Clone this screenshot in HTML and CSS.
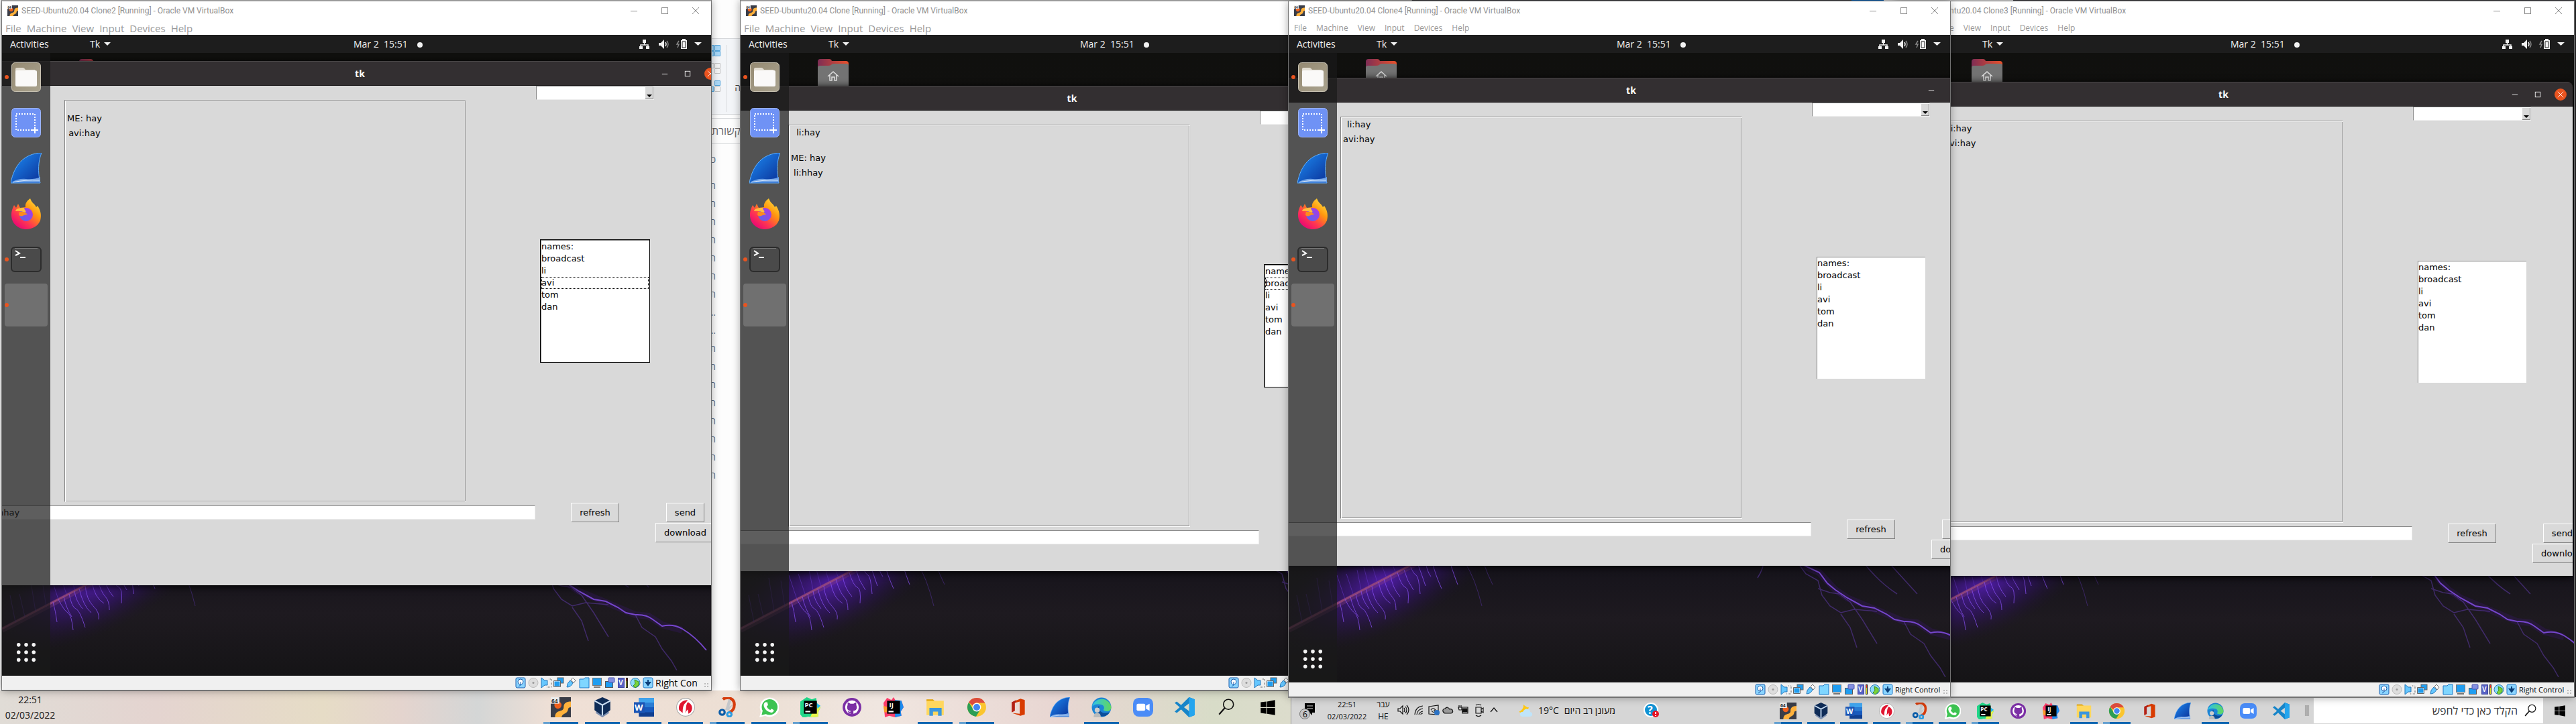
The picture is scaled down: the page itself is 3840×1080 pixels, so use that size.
FILE: index.html
```html
<!DOCTYPE html>
<html lang="en">
<head>
<meta charset="utf-8">
<title>Desktop</title>
<link rel="stylesheet" href="styles.css">
</head>
<body>
<svg class="defs" aria-hidden="true">
  <defs>
    <linearGradient id="g-files" x1="0" y1="0" x2="1" y2="1"><stop offset="0" stop-color="#958a72"/><stop offset="1" stop-color="#aaa38f"/></linearGradient>
    <linearGradient id="g-fin" x1="0" y1="0" x2="1" y2="1"><stop offset="0" stop-color="#1d8df5"/><stop offset="1" stop-color="#0a2f96"/></linearGradient>
    <linearGradient id="g-fox" x1="1" y1="0" x2="0.2" y2="1"><stop offset="0" stop-color="#fff44f"/><stop offset=".4" stop-color="#ff980e"/><stop offset=".7" stop-color="#ff3750"/><stop offset="1" stop-color="#e5007a"/></linearGradient>
    <linearGradient id="g-globe" x1="0" y1="1" x2="1" y2="0"><stop offset="0" stop-color="#4f6bef"/><stop offset="1" stop-color="#b833e1"/></linearGradient>
    <linearGradient id="g-tab"><stop offset="0" stop-color="#7e2d55"/><stop offset="1" stop-color="#e8502a"/></linearGradient>
    <linearGradient id="g-edge" x1="0" y1="0" x2="1" y2="0"><stop offset="0" stop-color="#2fc3ea"/><stop offset="1" stop-color="#62d75d"/></linearGradient>
    <radialGradient id="g-glow"><stop offset="0" stop-color="#5a1fc0" stop-opacity=".85"/><stop offset=".5" stop-color="#3a1280" stop-opacity=".5"/><stop offset="1" stop-color="#1d1030" stop-opacity="0"/></radialGradient>
  </defs>
  <symbol id="vm" viewBox="0 0 28 28"><rect width="28" height="28" fill="#3a3d48"/><path d="M6 28c0-12 12-6 12-14 0-6 4-8 10-8v8c-6 0-2 5-7 8-3 2-5 2-6 6z" fill="#ffb13b"/><circle cx="10" cy="11" r="5" fill="#f0601d"/><rect width="12" height="9" fill="#eee"/><text x="1" y="8" font-size="8" font-weight="700" font-family="Liberation Sans" fill="#222">64</text></symbol>
  <symbol id="files" viewBox="0 0 44 44"><rect x=".5" y=".5" width="43" height="43" rx="5" fill="url(#g-files)" stroke="#c9c3b3"/><path d="M6 14V10q0-2 2-2h9q2 0 4 3h14v6z" fill="#e2ddd2"/><rect x="6" y="12" width="32" height="24" rx="2" fill="#faf9f8"/></symbol>
  <symbol id="shot" viewBox="0 0 44 44"><rect x=".5" y=".5" width="43" height="43" rx="5" fill="#6f92f5" stroke="#9db5ff"/><rect x="7" y="9" width="28" height="24" fill="none" stroke="#fff" stroke-width="2" stroke-dasharray="2 2"/><path d="M35 28v10M30 33h10" stroke="#fff" stroke-width="2"/></symbol>
  <symbol id="fin" viewBox="0 0 46 46"><path d="M0 45C5 18 20 1 46 0c-5 12-6 28-2 45z" fill="url(#g-fin)" stroke="#5fb0ff"/><path d="M1 44q10-6 22-5t21-3v8z" fill="#6fa2e6"/><path d="M3 44q18-4 40-3" stroke="#dcebff" fill="none"/></symbol>
  <symbol id="fox" viewBox="0 0 46 46"><path d="M5 10l3 4 3-6 3 6 8-1C21 7 25 3 29 0c3 8 6 7 9 13l2-2c5 7 6 15 4 22-3 8-12 13-21 13C11 46 1 37 1 25 1 18 3 14 5 10z" fill="url(#g-fox)"/><circle cx="23" cy="24" r="10" fill="url(#g-globe)"/><path d="M7 19q8-1 14 2c4-2-1-3-1-7-4 0-12 0-13 5z" fill="#ffbd3f"/><path d="M12 24c3 6 8-1 13 0-2-3-7-5-12-4z" fill="#ff8a1e"/></symbol>
  <symbol id="term" viewBox="0 0 46 38"><rect x="1" y="1" width="44" height="36" rx="5" fill="#4a4a4a" stroke="#2c2c2c" stroke-width="2"/><path d="M6 2.500h34" stroke="#777"/><path d="M7 6l6 4-6 3" fill="none" stroke="#fff" stroke-width="2"/><path d="M14 16h8" stroke="#fff" stroke-width="2"/></symbol>
  <symbol id="apps" viewBox="0 0 30 32"><path d="M3 3h0M15 3h0M27 3h0M3 15h0M15 15h0M27 15h0M3 27h0M15 27h0M27 27h0" stroke="#f3f3f3" stroke-width="6" stroke-linecap="round"/></symbol>
  <symbol id="home" viewBox="0 0 46 44"><path d="M0 30V4q0-4 4-4h13q3 0 4 3h21q4 0 4 4v20z" fill="url(#g-tab)"/><path d="M0 44V13q0-3 3-3h13q3 0 5-2 1-1 3-1h19q3 0 3 3v34z" fill="#737373"/><path d="M15 26l8-7 8 7M18 24v8h3v-5h4v5h3v-8" fill="none" stroke="#e0e0e0" stroke-width="1.500"/></symbol>
  <symbol id="tray" viewBox="0 0 96 18"><g fill="#f2f2f2"><path d="M6 2h5v5H6zM1 12h5v4H1zM11 12h5v4h-5z"/><path d="M30 7h3l5-5v14l-5-5h-3zM63 3h2V1h5v2h2v13h-9z"/><path d="M83 6h11l-5.500 5z"/></g><path d="M8.500 7v3M3 12v-2h11v2M40 6q2 3 0 6" fill="none" stroke="#f2f2f2" stroke-width="1.500"/><path d="M42 4q4 5 0 10M60 4l-3 5h3l-2 5" fill="none" stroke="#888" stroke-width="1.500"/><path d="M65 5h5v9h-5z" fill="#f2f2f2" stroke="#1d1d1d"/></symbol>
  <symbol id="caret" viewBox="0 0 12 6"><path d="M1 0h10l-5 5z" fill="currentColor"/></symbol>
  <symbol id="drop" viewBox="0 0 12 18"><path d="M2 11h8l-4 4z" fill="#000"/></symbol>
  <symbol id="min" viewBox="0 0 12 12"><path d="M1 6.500h10" stroke="currentColor"/></symbol>
  <symbol id="max" viewBox="0 0 12 12"><rect x="1.500" y="1.500" width="9" height="9" fill="none" stroke="currentColor"/></symbol>
  <symbol id="close" viewBox="0 0 12 12"><path d="M1 1l10 10M11 1L1 11" stroke="currentColor" fill="none"/></symbol>
  <symbol id="devices" viewBox="0 0 207 17">
    <rect x="1" y="1" width="14" height="15" rx="2" fill="#8ad4ff" stroke="#1d5fae"/><circle cx="8" cy="7" r="4" fill="#fff" stroke="#1d5fae"/><path d="M8 7v5l-3 2" stroke="#1d5fae" fill="none"/>
    <circle cx="27" cy="8.500" r="7" fill="#ddd" stroke="#bbb"/><circle cx="27" cy="8.500" r="1.500" fill="#999"/>
    <path d="M39 1l5 4h4v7h-4l-5 4z" fill="#66c7ff" stroke="#2277bb"/><path d="M50 3h4v12h-7" stroke="#aaa" stroke-width="2" fill="none" stroke-dasharray="1 1"/>
    <rect x="63" y="1" width="9" height="8" fill="#1f9df0" stroke="#666"/><rect x="58" y="6" width="9" height="8" fill="#1f9df0" stroke="#eee"/><path d="M57.500 5.500h10v9h-10z" fill="none" stroke="#666"/>
    <path d="M77 15q0-6 5-10l4 4q-3 6-9 6z" fill="#66c7ff" stroke="#2277bb"/><path d="M83 4l3-3 4 4-3 4z" fill="#fff" stroke="#777"/>
    <path d="M96 16V3h6l2-2h6v15z" fill="#7fd6ff" stroke="#1d78c8"/>
    <rect x="115.500" y="1.500" width="13" height="11" fill="#1f9df0" stroke="#777"/><path d="M117 15h10" stroke="#777" stroke-width="2"/>
    <rect x="134.500" y="6.500" width="11" height="9" fill="#1f9df0" stroke="#555"/><rect x="139" y="1" width="9" height="7" rx="1" fill="#8490e0" stroke="#4a55b0"/>
    <rect x="153.500" y="1.500" width="9" height="14" fill="#5661c4" stroke="#39439e"/><text x="154" y="12" font-size="10" font-weight="700" font-family="Liberation Sans" fill="#fff">V</text><rect x="165" y="1" width="3" height="15" fill="#222"/><path d="M166.500 6v9" stroke="#d8e020"/><path d="M166.500 2v4" stroke="#f03020"/>
    <circle cx="179" cy="8.500" r="7" fill="#8fdcf8" stroke="#2277bb"/><path d="M178 4l6 3v5l-5 4-3-3 3-3z" fill="#7bd33b" stroke="#3c8e14"/>
    <rect x="191" y="1" width="14" height="15" rx="2" fill="#8ad4ff" stroke="#1d78c8"/><path d="M198 4v5M195 8h6l-3 4z" stroke="#0b3f7a" stroke-width="2" fill="#0b3f7a"/>
  </symbol>
  <symbol id="vbox" viewBox="0 0 28 28"><path d="M14 0l11 5v13l-11 9L3 18V5z" fill="#0f2c57"/><path d="M3 5l11 6 11-6M14 11v16" stroke="#c8dcf2" stroke-width="2" fill="none"/><path d="M5 21l9 6 9-6" stroke="#7c8fb0" stroke-width="2" fill="none"/></symbol>
  <symbol id="word" viewBox="0 0 28 28"><path d="M7 1h21v26H7z" fill="#185abd"/><path d="M7 1h21v7H7z" fill="#41a5ee"/><path d="M7 8h21v6H7z" fill="#2b7cd3"/><path d="M7 21h21v6H7z" fill="#103f91"/><rect y="7" width="15" height="15" fill="#1b55b5"/><text x="1" y="19" font-size="12" font-weight="700" font-family="Open Sans" fill="#fff">W</text></symbol>
  <symbol id="wire" viewBox="0 0 28 28"><circle cx="14" cy="14" r="12.500" fill="#fff" stroke="#aaa"/><path d="M5 18C3 9 10 4 17 4l-3 4c-4 3-4 9-4 14zM13 22c3-5 0-9 4-15 6 2 8 9 4 14l-3 2-1-6z" fill="#e01530"/></symbol>
  <symbol id="snip" viewBox="0 0 28 28"><path d="M8 3C14-2 24 2 24 10c0 6-3 10-7 11" stroke="#d63c0c" stroke-width="4" fill="none"/><path d="M12 16L16 2l4 3-5 13zM10 17l12-7-6 9z" fill="#c4c7ca"/><circle cx="7" cy="21" r="3.500" fill="none" stroke="#0a5ca8" stroke-width="3"/><circle cx="17" cy="24" r="3" fill="none" stroke="#2c9be0" stroke-width="3"/></symbol>
  <symbol id="wa" viewBox="0 0 28 28"><path d="M1 28l2-8A13.500 13.500 0 1 1 9 26z" fill="#fff"/><path d="M4 25l1.500-6A11 11 0 1 1 10 23.500z" fill="#3cc351"/><path d="M9 7l3 0 1 4-2 2q2 4 5 5l2-2 3 2c0 3-3 4-5 3-5-1-9-6-9-10 0-2 1-3 2-4z" fill="#fff"/></symbol>
  <symbol id="pc" viewBox="0 0 28 28"><path d="M0 6l9-6 7 3 6-2 1 7 5 6-3 7v6l-8 1-6-1-7 2-4-5z" fill="#21d789"/><path d="M14 27l9-18 5 5-3 7v6l-8 1z" fill="#e6f54a"/><path d="M22 8l6 4-4 4z" fill="#1fb8ef"/><rect x="5" y="5" width="18" height="18"/><text x="6" y="14" font-size="9" font-weight="700" font-family="Open Sans" fill="#fff">PC</text><path d="M7 20h7" stroke="#fff" stroke-width="2"/></symbol>
  <symbol id="gh" viewBox="0 0 28 28"><circle cx="14" cy="14" r="13" fill="#7b2fa5"/><circle cx="14" cy="14" r="9.500" fill="#fff"/><path d="M8 7l4 2h4l4-2 0 4c2 5 0 8-4 8v5h-4v-2q-3 1-4-3 2 2 4 1v-1c-4 0-6-4-4-8z" fill="#7b2fa5"/></symbol>
  <symbol id="ij" viewBox="0 0 28 28"><path d="M0 8l5-7 6 3 3-4 3 5 8 0 3 9-4 6 1 6-9 2-8-2-6 2z" fill="#fc3d6b"/><path d="M16 4l9 1 3 9-4 6 1 6-9 2z" fill="#1b8cf0"/><path d="M0 12l6 2v7l-5 0z" fill="#fc9a2b"/><rect x="5" y="5" width="18" height="18"/><text x="8" y="14" font-size="9" font-weight="700" font-family="Open Sans" fill="#fff">IJ</text><path d="M7 20h7" stroke="#fff" stroke-width="2"/></symbol>
  <symbol id="folder" viewBox="0 0 28 28"><path d="M2 6V3h9l3 3z" fill="#e0a000"/><path d="M2 5h24v20H2z" fill="#ffd75e"/><path d="M6 26V15h17v11h-5v-6h-7v6z" fill="#3b96de"/></symbol>
  <symbol id="chrome" viewBox="0 0 28 28"><circle cx="14" cy="14" r="13" fill="#fbc52d"/><path d="M3 7a13 13 0 0 1 22.500 1H14a6 6 0 0 0-5.500 4z" fill="#dd4b3e"/><path d="M3 7a13 13 0 0 0 10 20l6-10a6 6 0 0 1-10 0z" fill="#2c9e55"/><circle cx="14" cy="14" r="6" fill="#fff"/><circle cx="14" cy="14" r="4.700" fill="#4486f0"/></symbol>
  <symbol id="office" viewBox="0 0 28 28"><path d="M5 7l12-5 6 2v20l-6 2-12-4 11 1V6L9 8v11l-4 2z" fill="#d83b01"/><path d="M5 7l6-3v3L9 8v11l-4 2z" fill="#b02018"/></symbol>
  <symbol id="edge" viewBox="0 0 28 28"><circle cx="14" cy="14" r="13.500" fill="#1c85d6"/><path d="M1 13A13.500 13.500 0 0 1 27.500 14c0 6-7 7-11 4 3-4 0-8-5-8-5-1-9 1-10.500 3z" fill="url(#g-edge)"/><path d="M11 12c-2 7 4 12 14 9-4 8-17 8-17-2 0-4 1-6 3-7z" fill="#0c4e9a"/><circle cx="8" cy="18" r="3.500" fill="#ccc"/><path d="M3 28q0-6 5-6t5 6z" fill="#bbb"/></symbol>
  <symbol id="zoomapp" viewBox="0 0 28 28"><rect x="0" y="1" width="28" height="26" rx="8" fill="#4a8cf7"/><rect x="5" y="9" width="12" height="10" rx="2" fill="#fff"/><path d="M18 12l5-3v10l-5-3z" fill="#fff"/></symbol>
  <symbol id="code" viewBox="0 0 28 28"><path d="M20 0l8 3v22l-8 3L9 17l-6 5-3-2 7-6-7-6 3-2 6 5zM21 8l-8 6 8 6z" fill="#1685c9"/><path d="M20 0l8 3v22l-8 3z" fill="#24a5ee"/></symbol>
  <symbol id="search" viewBox="0 0 28 28"><circle cx="17" cy="10" r="7" fill="none" stroke="#111" stroke-width="1.500"/><path d="M12 15L4 24" stroke="#111" stroke-width="2"/></symbol>
  <symbol id="start" viewBox="0 0 28 28"><path d="M4 7l8-1v8H4zM13 6l11-2v10H13zM4 15h8v8l-8-1zM13 15h11v10l-11-2z" fill="#000"/></symbol>
  <symbol id="glow" viewBox="0 0 460 260">
    <ellipse cx="140" cy="110" rx="180" ry="76" fill="url(#g-glow)" transform="rotate(-26 140 110)"/>
    <path d="M0 182L180 88L340 4" stroke="#8a3f78" stroke-width="8" opacity=".35" fill="none"/>
    <path d="M0 180L180 86L340 2" stroke="#a4507c" stroke-width="3" opacity=".7" fill="none"/>
    <path d="M76 140q4 14 6 30M84 136q8 16 14 20t8 26M92 132q4 18 12 30M100 128q4 20 10 22t14 28M108 124q2 14 12 26M115 120q6 26 18 36M124 116q2 20 12 30t8 20M134 110q4 24 18 32M142 106q6 20 12 26t6 20M152 100q2 18 14 32M162 96q6 20 12 22t4 24M172 92q4 16 14 30M182 88q4 10 8 12t6 28M192 82q6 16 12 34M204 80q2 14 8 22M214 80q4 18 14 40M240 80q8 24 12 34" stroke="#8850f4" stroke-width="1" fill="none" opacity=".75"/>
    <path d="M262 80q16 24 26 66M290 80q6 18 14 34" stroke="#5a34a8" fill="none" opacity=".5"/>
    <path d="M20 170l-8-40M34 162l-8-34M50 154l-8-50M66 148l-6-40M84 136l-12-36M96 128l-10-30M108 122l-6-30M120 118l-8-30M132 110l-8-26M146 104l-8-20M160 98l-6-16" stroke="#6a38d0" fill="none" opacity=".5"/>
  </symbol>
  <symbol id="bolt" viewBox="0 0 360 220">
    <path d="M20 6L60 32L84 56L104 64L128 90L146 102L180 116L204 126L230 137L250 139L270 152L300 160" stroke="#3b1670" stroke-width="10" opacity=".3" fill="none"/>
    <path d="M20 6L60 32L74 50L104 64L116 80L128 90L146 102L168 114L186 117L204 126L216 134L230 137Q246 136 256 144L270 154Q286 150 300 158Q320 170 336 190" stroke="#7546cc" stroke-width="2" fill="none"/>
    <path d="M60 34L84 66L102 76L108 98L120 114L136 124L156 119L190 122M230 137L240 156L260 170L270 188L284 206L292 220M102 88L120 94L134 96L150 108L168 134L190 170M136 126L150 146L160 176M20 30Q26 50 12 72M150 20Q180 70 220 96M190 30L250 96" stroke="#5f3aa8" stroke-width="1.500" opacity=".55" fill="none"/>
  </symbol>
</svg>

<div class="strip"><span class="strip-blue"></span><span class="strip-light"></span></div>

<aside class="doc" lang="he" dir="rtl">
  <div class="doc-top"></div>
  <div class="doc-ribbon">
    <svg class="doc-tiles" viewBox="0 0 14 70"><g fill="#a9d8f8" stroke="#52a5dd"><path d="M-3 .500h7v8h-7zM5.500.500h8v8h-8zM-3 9.500h7v7h-7zM5.500 9.500h8v7h-8zM5.500 53.500h8v7h-8zM-3 62.500h7v7h-7z"/></g><g fill="#f4f4f4" stroke="#c4c4c4"><path d="M5.500 27.500h8v7h-8zM5.500 35.500h8v7h-8zM5.500 62.500h8v7h-8zM-3 27.500h7v7h-7z"/></g></svg>
    <span class="doc-he">ה</span>
  </div>
  <div class="doc-band">קשורת</div>
  <div class="doc-lines"><p class="doc-first">כ</p><p>ת</p><p>ת</p><p>ת</p><p>ת</p><p>ת</p><p>ת</p><p>ת</p><p>...</p><p>...</p><p>ת</p><p>ת</p><p>ת</p><p>ת</p><p>ת</p><p>ת</p><p>ת</p><p>ת</p></div>
</aside>

<main>
<section class="win w4" aria-label="Clone3">
  <header class="titlebar"><svg class="vm-ico"><use href="#vm"/></svg><h1>SEED-Ubuntu20.04 Clone3 [Running] - Oracle VM VirtualBox</h1><button aria-label="Minimize"><svg><use href="#min"/></svg></button><button aria-label="Maximize"><svg><use href="#max"/></svg></button><button aria-label="Close"><svg><use href="#close"/></svg></button></header>
  <nav class="menubar"><a href="#">File</a><a href="#">Machine</a><a href="#">View</a><a href="#">Input</a><a href="#">Devices</a><a href="#">Help</a></nav>
  <div class="panel"><span class="activities">Activities</span><span class="appmenu">Tk <svg><use href="#caret"/></svg></span><time>Mar 2&nbsp; 15:51</time><svg class="tray"><use href="#tray"/></svg></div>
  <div class="screen">
    <svg class="glow"><use href="#glow"/></svg><svg class="bolt"><use href="#bolt"/></svg><svg class="home"><use href="#home"/></svg>
    <div class="tk">
      <div class="tk-bar"><h2>tk</h2><button aria-label="Minimize"><svg><use href="#min"/></svg></button><button aria-label="Maximize"><svg><use href="#max"/></svg></button><button class="x" aria-label="Close"><svg><use href="#close"/></svg></button></div>
      <div class="tk-body">
        <div class="combo"><select aria-label="Files"><option></option></select><svg><use href="#drop"/></svg></div>
        <div class="tk-mid"><div class="chat"><div class="msgs"><p>li:hay</p><p>avi:hay</p></div></div><ul class="names" role="listbox" aria-label="Names"><li>names:</li><li>broadcast</li><li>li</li><li>avi</li><li>tom</li><li>dan</li></ul></div>
        <div class="tk-row"><input type="text" aria-label="Message"><button class="refresh">refresh</button><button class="send">send</button></div>
        <button class="download">download</button>
      </div>
    </div>
    <div class="dock"><span class="slot on"><svg class="i44"><use href="#files"/></svg></span><span class="slot"><svg class="i44"><use href="#shot"/></svg></span><span class="slot"><svg class="i46"><use href="#fin"/></svg></span><span class="slot"><svg class="i46"><use href="#fox"/></svg></span><span class="slot on"><svg class="i46"><use href="#term"/></svg></span><span class="slot on active"></span><span class="slot apps"><svg><use href="#apps"/></svg></span></div>
  </div>
  <footer class="status"><svg class="devices"><use href="#devices"/></svg><span>Right Control</span><i class="grip"></i></footer>
</section>

<section class="win w2 big" aria-label="Clone">
  <header class="titlebar"><svg class="vm-ico"><use href="#vm"/></svg><h1>SEED-Ubuntu20.04 Clone [Running] - Oracle VM VirtualBox</h1></header>
  <nav class="menubar"><a href="#">File</a><a href="#">Machine</a><a href="#">View</a><a href="#">Input</a><a href="#">Devices</a><a href="#">Help</a></nav>
  <div class="panel"><span class="activities">Activities</span><span class="appmenu">Tk <svg><use href="#caret"/></svg></span><time>Mar 2&nbsp; 15:51</time></div>
  <div class="screen">
    <svg class="glow"><use href="#glow"/></svg><svg class="bolt"><use href="#bolt"/></svg><svg class="home"><use href="#home"/></svg>
    <div class="tk">
      <div class="tk-bar"><h2>tk</h2></div>
      <div class="tk-body">
        <div class="combo"><select aria-label="Files"><option></option></select><svg><use href="#drop"/></svg></div>
        <div class="tk-mid"><div class="chat"><div class="msgs"><p>li:hay</p><p><br>ME: hay</p><p>li:hhay</p></div></div><ul class="names focus" role="listbox" aria-label="Names"><li>names:</li><li class="cur">broadcast</li><li>li</li><li>avi</li><li>tom</li><li>dan</li></ul></div>
        <div class="tk-row"><input type="text" aria-label="Message"></div>
      </div>
    </div>
    <div class="dock"><span class="slot on"><svg class="i44"><use href="#files"/></svg></span><span class="slot"><svg class="i44"><use href="#shot"/></svg></span><span class="slot"><svg class="i46"><use href="#fin"/></svg></span><span class="slot"><svg class="i46"><use href="#fox"/></svg></span><span class="slot on"><svg class="i46"><use href="#term"/></svg></span><span class="slot on active"></span><span class="slot apps"><svg><use href="#apps"/></svg></span></div>
  </div>
  <footer class="status"><svg class="devices"><use href="#devices"/></svg></footer>
</section>

<section class="win w1 big" aria-label="Clone2">
  <header class="titlebar"><svg class="vm-ico"><use href="#vm"/></svg><h1>SEED-Ubuntu20.04 Clone2 [Running] - Oracle VM VirtualBox</h1><button aria-label="Minimize"><svg><use href="#min"/></svg></button><button aria-label="Maximize"><svg><use href="#max"/></svg></button><button aria-label="Close"><svg><use href="#close"/></svg></button></header>
  <nav class="menubar"><a href="#">File</a><a href="#">Machine</a><a href="#">View</a><a href="#">Input</a><a href="#">Devices</a><a href="#">Help</a></nav>
  <div class="panel"><span class="activities">Activities</span><span class="appmenu">Tk <svg><use href="#caret"/></svg></span><time>Mar 2&nbsp; 15:51</time><svg class="tray"><use href="#tray"/></svg></div>
  <div class="screen">
    <svg class="glow"><use href="#glow"/></svg><svg class="bolt"><use href="#bolt"/></svg><svg class="home"><use href="#home"/></svg>
    <div class="tk">
      <div class="tk-bar"><h2>tk</h2><button aria-label="Minimize"><svg><use href="#min"/></svg></button><button aria-label="Maximize"><svg><use href="#max"/></svg></button><button class="x" aria-label="Close"><svg><use href="#close"/></svg></button></div>
      <div class="tk-body">
        <div class="combo"><select aria-label="Files"><option></option></select><svg><use href="#drop"/></svg></div>
        <div class="tk-mid"><div class="chat"><div class="msgs"><p><br>ME: hay</p><p>avi:hay</p></div></div><ul class="names focus" role="listbox" aria-label="Names"><li>names:</li><li>broadcast</li><li>li</li><li class="cur">avi</li><li>tom</li><li>dan</li></ul></div>
        <div class="tk-row"><input type="text" aria-label="Message" value="hhay"><button class="refresh">refresh</button><button class="send">send</button></div>
        <button class="download">download</button>
      </div>
    </div>
    <div class="dock"><span class="slot on"><svg class="i44"><use href="#files"/></svg></span><span class="slot"><svg class="i44"><use href="#shot"/></svg></span><span class="slot"><svg class="i46"><use href="#fin"/></svg></span><span class="slot"><svg class="i46"><use href="#fox"/></svg></span><span class="slot on"><svg class="i46"><use href="#term"/></svg></span><span class="slot on active"></span><span class="slot apps"><svg><use href="#apps"/></svg></span></div>
  </div>
  <footer class="status"><svg class="devices"><use href="#devices"/></svg><span>Right Control</span><i class="grip"></i></footer>
</section>

<section class="win w3" aria-label="Clone4">
  <header class="titlebar"><svg class="vm-ico"><use href="#vm"/></svg><h1>SEED-Ubuntu20.04 Clone4 [Running] - Oracle VM VirtualBox</h1><button aria-label="Minimize"><svg><use href="#min"/></svg></button><button aria-label="Maximize"><svg><use href="#max"/></svg></button><button aria-label="Close"><svg><use href="#close"/></svg></button></header>
  <nav class="menubar"><a href="#">File</a><a href="#">Machine</a><a href="#">View</a><a href="#">Input</a><a href="#">Devices</a><a href="#">Help</a></nav>
  <div class="panel"><span class="activities">Activities</span><span class="appmenu">Tk <svg><use href="#caret"/></svg></span><time>Mar 2&nbsp; 15:51</time><svg class="tray"><use href="#tray"/></svg></div>
  <div class="screen">
    <svg class="glow"><use href="#glow"/></svg><svg class="bolt"><use href="#bolt"/></svg><svg class="home"><use href="#home"/></svg>
    <div class="tk">
      <div class="tk-bar"><h2>tk</h2><button aria-label="Minimize"><svg><use href="#min"/></svg></button><button aria-label="Maximize"><svg><use href="#max"/></svg></button><button class="x" aria-label="Close"><svg><use href="#close"/></svg></button></div>
      <div class="tk-body">
        <div class="combo"><select aria-label="Files"><option></option></select><svg><use href="#drop"/></svg></div>
        <div class="tk-mid"><div class="chat"><div class="msgs"><p>li:hay</p><p>avi:hay</p></div></div><ul class="names" role="listbox" aria-label="Names"><li>names:</li><li>broadcast</li><li>li</li><li>avi</li><li>tom</li><li>dan</li></ul></div>
        <div class="tk-row"><input type="text" aria-label="Message"><button class="refresh">refresh</button><button class="send">send</button></div>
        <button class="download">download</button>
      </div>
    </div>
    <div class="dock"><span class="slot on"><svg class="i44"><use href="#files"/></svg></span><span class="slot"><svg class="i44"><use href="#shot"/></svg></span><span class="slot"><svg class="i46"><use href="#fin"/></svg></span><span class="slot"><svg class="i46"><use href="#fox"/></svg></span><span class="slot on"><svg class="i46"><use href="#term"/></svg></span><span class="slot on active"></span><span class="slot apps"><svg><use href="#apps"/></svg></span></div>
  </div>
  <footer class="status"><svg class="devices"><use href="#devices"/></svg><span>Right Control</span><i class="grip"></i></footer>
</section>
</main>

<div class="taskbars">
  <div class="taskbar left">
    <div class="clock"><span>22:51</span><span>02/03/2022</span></div>
    <div class="tasks">
      <button class="run many" aria-label="VM console"><svg><use href="#vm"/></svg></button><button class="run" aria-label="VirtualBox"><svg><use href="#vbox"/></svg></button><button class="run" aria-label="Word"><svg><use href="#word"/></svg></button><button class="run" aria-label="Updater"><svg><use href="#wire"/></svg></button><button class="run many" aria-label="Snipping Tool"><svg><use href="#snip"/></svg></button><button class="run" aria-label="WhatsApp"><svg><use href="#wa"/></svg></button><button class="run many" aria-label="PyCharm"><svg><use href="#pc"/></svg></button><button aria-label="GitHub"><svg><use href="#gh"/></svg></button><button aria-label="IntelliJ"><svg><use href="#ij"/></svg></button><button class="run" aria-label="Explorer"><svg><use href="#folder"/></svg></button><button class="run many" aria-label="Chrome"><svg><use href="#chrome"/></svg></button><button aria-label="Office"><svg><use href="#office"/></svg></button><button aria-label="Wireshark"><svg><use href="#fin"/></svg></button><button class="run" aria-label="Edge"><svg><use href="#edge"/></svg></button><button aria-label="Zoom"><svg><use href="#zoomapp"/></svg></button><button aria-label="VS Code"><svg><use href="#code"/></svg></button><button aria-label="Search"><svg><use href="#search"/></svg></button><button aria-label="Start"><svg><use href="#start"/></svg></button>
    </div>
  </div>
  <div class="taskbar right">
    <svg class="note" viewBox="0 0 24 28"><path d="M8 3h15v14h-4v4l-4-4H8z"/><path d="M11 7h9M11 11h9" stroke="#ddd"/><circle cx="8" cy="19" r="7.500" fill="#c4c4c4" stroke="#777"/><text x="5" y="24" font-size="12" font-family="Open Sans">6</text></svg>
    <div class="clock"><span>22:51</span><span>02/03/2022</span></div>
    <div class="lang"><span lang="he">עבר</span><span>HE</span></div>
    <svg class="systray" viewBox="0 0 152 20"><g fill="none" stroke="#111" stroke-width="1.200"><path d="M1 8h3l4-4v12l-4-4H1zM10 7q2 3 0 6M12 5q4 5 0 10M14 3q6 7 0 14"/><path d="M26 17Q27 5 38 4M29 17q1-8 9-9M32 17q1-4 6-5M35 17q0-2 3-2"/><path d="M47 5l14-2v14l-14-1zM50 10q3-5 7 0M56 9v2h-2M57 11q-3 5-6 0"/><path d="M72 15h8q4-1 2-5-2-2-4-1-3-5-7-1-4 1-3 4 1 3 4 3z" fill="#999"/><path d="M95 6h10v9h-8v-4M92 3v3M95 3v3M91 6h5v4h-4z"/><path d="M97 8h7v5h-7z" fill="#111"/><path d="M117 6h8v9h-8zM125 9l3-2v7l-3-2M117 3q4-3 8 0M117 18q4 3 8 0"/><path d="M139 13l5-6 5 6"/></g><circle cx="59" cy="14" r="4" fill="#2b72c4"/></svg>
    <svg class="weather" viewBox="0 0 22 20"><path d="M1 12Q9 8 8 1q5 5 8 4-2 8-9 9z" fill="#ffc814"/><path d="M6 19q-4-1-3-5 2-3 4-2 3-6 8-4 3 1 3 4 4 1 3 5-1 2-4 2z" fill="#bfe4fa"/></svg>
    <span class="temp">19°C</span><span class="sky" lang="he" dir="rtl">מעונן רב היום</span>
    <svg class="help" viewBox="0 0 24 24"><circle cx="11" cy="11" r="10" fill="#1192d4" stroke="#fff" stroke-width="2"/><text x="6" y="17" font-size="16" font-weight="700" font-family="Open Sans" fill="#fff">?</text><circle cx="18" cy="17" r="5" fill="#e81224"/><path d="M18 14v3M18 19v1" stroke="#fff" stroke-width="2"/></svg>
    <div class="tasks">
      <button class="run many" aria-label="VM console"><svg><use href="#vm"/></svg></button><button class="run" aria-label="VirtualBox"><svg><use href="#vbox"/></svg></button><button class="run" aria-label="Word"><svg><use href="#word"/></svg></button><button class="run" aria-label="Updater"><svg><use href="#wire"/></svg></button><button class="run many" aria-label="Snipping Tool"><svg><use href="#snip"/></svg></button><button class="run" aria-label="WhatsApp"><svg><use href="#wa"/></svg></button><button class="run many" aria-label="PyCharm"><svg><use href="#pc"/></svg></button><button aria-label="GitHub"><svg><use href="#gh"/></svg></button><button aria-label="IntelliJ"><svg><use href="#ij"/></svg></button><button class="run" aria-label="Explorer"><svg><use href="#folder"/></svg></button><button class="run many" aria-label="Chrome"><svg><use href="#chrome"/></svg></button><button aria-label="Office"><svg><use href="#office"/></svg></button><button aria-label="Wireshark"><svg><use href="#fin"/></svg></button><button class="run" aria-label="Edge"><svg><use href="#edge"/></svg></button><button aria-label="Zoom"><svg><use href="#zoomapp"/></svg></button><button aria-label="VS Code"><svg><use href="#code"/></svg></button>
    </div>
    <i class="divider"></i>
    <label class="searchbox" dir="rtl" lang="he"><svg><use href="#search"/></svg><input type="text" placeholder="הקלד כאן כדי לחפש" aria-label="חיפוש"></label>
    <button class="startbtn" aria-label="Start"><svg><use href="#start"/></svg></button>
  </div>
</div>
</body>
</html>
```

FILE: styles.css
```css
* { box-sizing: border-box; }
body {
  margin: 0;
  min-height: 100vh;
  position: relative;
  overflow: hidden;
  display: flex;
  flex-direction: column;
  justify-content: flex-end;
  background: linear-gradient(90deg, #fdfdfd 50%, #2a2a2c 50%);
  font-family: "Open Sans", "Noto Sans", "DejaVu Sans", sans-serif;
  font-size: 12px;
}
.defs { position: absolute; top: 0; left: 0; width: 0; height: 0; }
button { font: inherit; border: 0; padding: 0; background: none; color: inherit; }
a { color: inherit; text-decoration: none; }
h1, h2, p, ul { margin: 0; padding: 0; font-weight: inherit; font-size: inherit; list-style: none; }

/* sliver of the window behind the right-hand guests */
.strip { position: absolute; z-index: 1; top: 0; left: 50%; right: 0; height: 2px; display: flex; background: #38383c; }
.strip-blue { margin-left: 840px; width: 48px; background: #0a5fae; }
.strip-light { width: 193px; background: #e3e3e3; }

/* document seen between the first two guests */
.doc { position: absolute; top: 0; left: 1056px; width: 48px; color: #444; }
.doc-top { height: 57px; }
.doc-ribbon { display: flex; justify-content: space-between; align-items: flex-start; flex-direction: row-reverse; height: 114px; padding: 9px 0 0 4px; background: #f3f5f8; border: solid #d5d7da; border-width: 1px 0; }
.doc-tiles { width: 14px; height: 70px; }
.doc-he { width: 22px; height: 100px; padding: 54px 0 0 0; border-left: 1px solid #dcdde0; font-size: 14px; line-height: 20px; text-align: right; }
.doc-band { margin-top: 5px; height: 39px; border: solid #d5d7da; border-width: 1px 0; font-size: 16px; line-height: 37px; white-space: nowrap; color: #666; }
.doc-lines { width: 19px; padding: 7px 8px 0 0; margin-right: 29px; font-size: 14px; line-height: 27px; color: #5c6c80; text-align: right; }
.doc-lines .doc-first { margin-bottom: 9px; line-height: 32px; }

/* virtual machine windows */
main { position: absolute; inset: 0; z-index: 2; }
.win {
  position: absolute;
  isolation: isolate;
  top: 0;
  bottom: var(--bar);
  left: var(--x);
  width: var(--w);
  display: flex;
  flex-direction: column;
  overflow: hidden;
  background: #fff;
  box-shadow: 0 0 12px rgba(0, 0, 0, .4), 0 0 0 1px #8c8c8c;
}
.w1 { --x: 3px; --w: 1057px; --bar: 50px; --clock: 524px; --tx: -7px; --ty: 12px; --tw: 1081px; --th: 745px; --bolt: 714px; border-top: 2px solid #9b9b9b; }
.w2 { --x: 1104px; --w: 1000px; --bar: 50px; --clock: 506px; --tx: -29px; --ty: 49px; --tw: 1046px; --th: 687px; --bolt: 705px; border-top: 2px solid #9b9b9b; }
.w3 { --x: 1921px; --w: 986px; --bar: 40px; --clock: 489px; --tx: -23px; --ty: 37px; --tw: 1067px; --th: 691px; --bolt: 687px; margin-top: 2px; }
.w4 { --x: 2824px; --w: 1013px; --bar: 40px; --clock: 501px; --tx: -30px; --ty: 43px; --tw: 1041px; --th: 700px; --bolt: 698px; margin-top: 2px; }
.titlebar { display: flex; align-items: center; height: 28px; padding-left: 8px; color: #8f8f8f; }
.titlebar h1 { flex: 1; margin-left: 5px; font: 12px/16px Roboto, "Open Sans", sans-serif; white-space: nowrap; }
.titlebar button { width: 46px; height: 28px; color: #8a8a8a; display: grid; place-items: center; }
.titlebar button svg { width: 12px; height: 12px; }
.vm-ico { width: 16px; height: 16px; }
.menubar { display: flex; gap: 14px; height: 22px; padding-left: 8px; color: #999; line-height: 24px; }
.big .menubar { gap: 8px; padding-left: 5px; font-size: 15px; }
.panel { position: relative; flex: none; display: flex; align-items: center; height: 27px; padding: 0 12px; background: #1d1d1d; color: #f2f2f2; font-size: 14px; line-height: 27px; }
.activities { width: 119px; }
.appmenu svg { width: 12px; height: 6px; margin: 0 0 2px 1px; }
.panel time { position: absolute; left: var(--clock); white-space: nowrap; }
.panel time::after { content: ""; display: inline-block; width: 8px; height: 8px; margin-left: 14px; border-radius: 50%; background: #f2f2f2; }
.tray { width: 96px; height: 18px; margin-left: auto; }

.screen { position: relative; flex: 1; overflow: hidden; background: linear-gradient(#10100e, #14121a 80%, #1e1a20 90%, #151416); }
.home { position: absolute; left: 115px; top: 9px; width: 46px; height: 44px; }
.glow { position: absolute; left: 0; top: 679px; width: 460px; height: 260px; }
.bolt { position: absolute; left: var(--bolt); bottom: 8px; width: 360px; height: 220px; }

.dock { position: absolute; inset: 0 auto 0 0; width: 72px; padding-top: 2px; display: flex; flex-direction: column; background: rgba(26, 26, 26, .7); }
.slot { position: relative; height: 68px; flex: none; display: grid; place-items: center; }
.slot.on::before { content: ""; position: absolute; z-index: 1; left: 4px; width: 6px; height: 6px; border-radius: 50%; background: #e95420; }
.slot.active::after { content: ""; width: 64px; height: 64px; border-radius: 4px; background: rgba(255, 255, 255, .17); }
.slot.apps { margin-top: auto; }
.slot.apps svg { width: 30px; height: 30px; }
.i44 { width: 44px; height: 44px; }
.i46 { width: 46px; height: 46px; }

/* tk chat window */
.tk { position: absolute; left: var(--tx); top: var(--ty); width: var(--tw); overflow: hidden; border-radius: 8px 8px 0 0; box-shadow: 0 2px 12px #000; }
.tk-bar { position: relative; display: flex; justify-content: flex-end; align-items: center; gap: 16px; height: 37px; padding-right: 9px; background: #332f31; border: solid #4a4748; border-width: 1px 0 0; box-shadow: inset 0 -1px #1c1a1b; color: #fff; }
.tk-bar h2 { position: absolute; inset: 0; text-align: center; font-size: 14px; font-weight: 700; line-height: 35px; }
.tk-bar button { position: relative; width: 18px; height: 18px; display: grid; place-items: center; border-radius: 50%; }
.tk-bar svg { width: 10px; height: 10px; }
.tk-bar .x { background: #e95420; }
.tk-body { height: var(--th); background: #d9d9d9; color: #000; font: 13px/16px "DejaVu Sans", sans-serif; }
.combo { position: relative; width: 176px; height: 21px; margin-left: 803px; }
.combo select { appearance: none; display: block; width: 176px; height: 21px; border: 1px solid; border-color: #8a8a8a #eee #eee #8a8a8a; border-radius: 0; background: #fff; }
.combo svg { position: absolute; right: 1px; top: 2px; width: 12px; height: 18px; background: #d9d9d9; box-shadow: inset -1px -1px #828282; }
.tk-mid { display: flex; align-items: center; gap: 110px; padding-left: 100px; }
.chat { flex: none; width: 599px; height: 600px; border: 1px solid; border-color: #828282 #fff #fff #828282; box-shadow: inset 1px 1px #fff, inset -1px -1px #828282; }
.msgs { width: max-content; padding-left: 3px; text-align: center; }
.msgs p { padding: 3px 0; }
.names { flex: none; width: 164px; height: 184px; padding: 1px 0 0 1px; border: 1px solid #d9d9d9; background: #fff; box-shadow: inset 1px 1px #828282; line-height: 18px; }
.names.focus { border-color: #000; }
.names li { height: 18px; margin-right: 1px; }
.names .cur { outline: 1px dotted #000; outline-offset: -1px; }
.tk-row { display: flex; align-items: center; height: 31px; }
.tk-row input { flex: none; width: 802px; height: 21px; padding: 0; border: 1px solid; border-color: #8a8a8a #eee #eee #8a8a8a; background: #fff; color: #000; font: inherit; }
.tk-body button { flex: none; height: 29px; background: #d9d9d9; border: 1px solid; border-color: #fff #828282 #828282 #fff; white-space: nowrap; }
.refresh { width: 72px; margin-left: 53px; }
.send { width: 57px; margin-left: 70px; }
.download { display: block; width: 89px; margin-left: 981px; }

.status { display: flex; align-items: center; justify-content: flex-end; height: 22px; padding-right: 4px; background: #f0f0f0; color: #000; border-bottom: 1px solid #777; }
.devices { flex: none; width: 207px; height: 17px; }
.status span { flex: none; width: 70px; height: 18px; margin-left: 2px; font: 11px/18px "Open Sans", sans-serif; white-space: nowrap; }
.grip { width: 8px; height: 8px; margin-top: 8px; background: conic-gradient(#bbb 25%, transparent 0) 0 0 / 4px 4px; }
.big .status span { width: 63px; margin-right: 8px; overflow: hidden; font-size: 14px; }
.w2 .status { padding-right: 66px; }

/* host taskbars */
.taskbars { display: grid; grid-template-columns: 1924fr 1916fr; align-items: end; }
.taskbar { display: flex; align-items: center; color: #111; }
.taskbar.left { height: 50px; background: linear-gradient(90deg, #e0dcd6, #e4d4d0 12%, #e6dcc6 25%, #e4d4ce 31%, #d4d6d6 37%, #f0e0d6 43%, #ecdfd4 58%, #f0e6e0 68%, #e8d6d2 82%, #d8dcc8 94%, #dcdccc); }
.taskbar.right { height: 40px; background: #d6d6d6; border-left: 1px solid #999; }
.clock, .lang { display: flex; flex-direction: column; align-items: center; }
.left .clock { width: 90px; font-size: 14px; line-height: 23px; }
.right .clock { width: 60px; margin-left: 17px; font-size: 11px; line-height: 18px; }
.tasks { display: flex; margin-left: auto; align-self: stretch; }
.tasks button { width: 62px; height: 50px; display: grid; place-items: center; border: solid transparent; border-width: 0 5px; background-clip: padding-box; }
.left .tasks { margin-right: 3px; }
.tasks svg { width: 30px; height: 30px; }
.tasks .run { background: linear-gradient(#0a64b0, #0a64b0) bottom / 100% 3px no-repeat padding-box; }
.tasks .many { background: linear-gradient(90deg, #64a0d0 10px, #0a64b0 10px) bottom / 100% 3px no-repeat padding-box; }
.right .tasks button { width: 49px; height: 40px; border-width: 0 4px; }
.right .tasks svg { width: 25px; height: 25px; }
.note { width: 24px; height: 28px; margin-left: 12px; }
.lang { width: 30px; margin-left: 9px; line-height: 18px; }
.systray { width: 152px; height: 20px; margin: 0 0 2px 6px; }
.weather { width: 22px; height: 20px; margin-left: 28px; }
.temp, .sky { margin-left: 8px; font-size: 14px; line-height: 20px; white-space: nowrap; }
.help { width: 24px; height: 24px; margin-left: 42px; }
.divider { width: 4px; height: 16px; margin: 0 8px 0 12px; border: solid #222; border-width: 0 1px; }
.searchbox { display: flex; align-items: center; width: 342px; height: 38px; padding-right: 8px; background: #fff; }
.searchbox svg { width: 22px; height: 22px; flex: none; }
.searchbox input { flex: 1; min-width: 0; padding: 0 8px; border: 0; background: none; font: inherit; font-size: 16px; }
.searchbox input::placeholder { color: #333; opacity: 1; }
.startbtn { width: 49px; height: 40px; display: grid; place-items: center; }
.startbtn svg { width: 22px; height: 22px; }
```
